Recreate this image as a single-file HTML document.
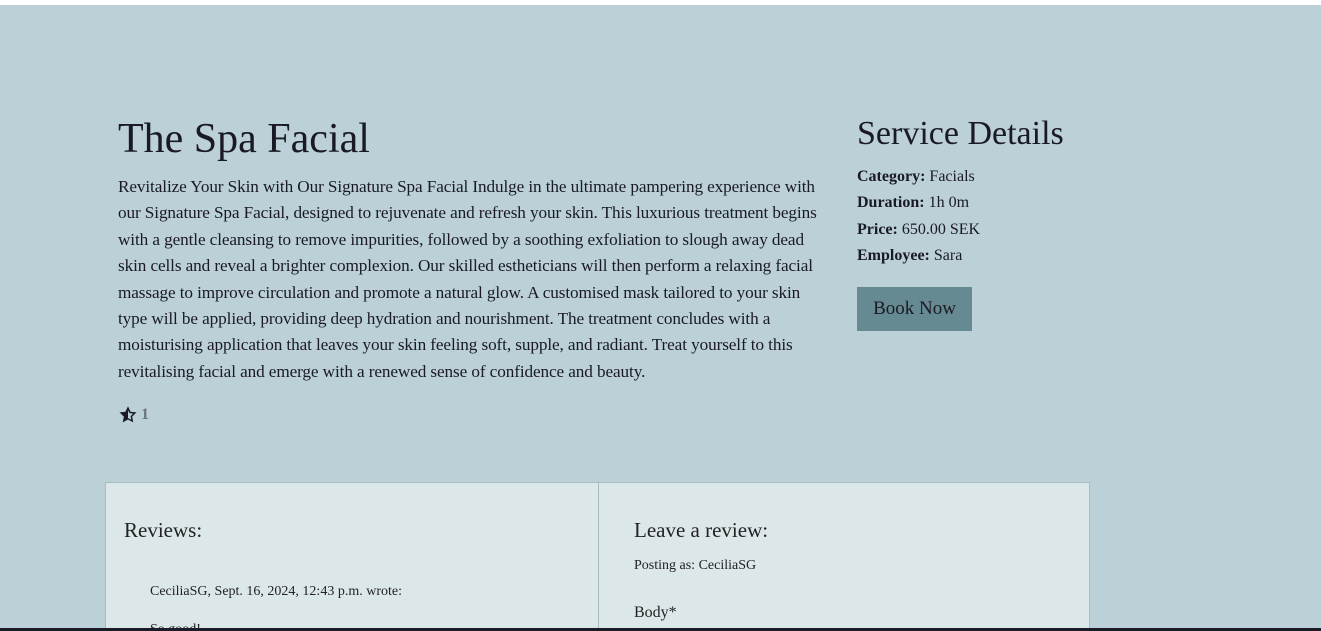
<!DOCTYPE html>
<html><head><style>
html,body{margin:0;padding:0;width:1321px;height:631px;overflow:hidden;}
body{background:#fff;position:relative;font-family:"Liberation Serif",serif;color:#1a1a24;}
.bg{position:absolute;top:5px;left:0;width:1321px;height:626px;background:#bbd0d7;}
.bot{position:absolute;left:0;top:628px;width:1321px;height:3px;background:#1c1c28;}
.a{position:absolute;white-space:nowrap;}
h1{position:absolute;left:118px;top:113px;margin:0;font-weight:normal;font-size:42px;line-height:52px;}
.desc{position:absolute;left:118px;top:174px;font-size:17.2px;line-height:26.4px;white-space:nowrap;letter-spacing:-0.1px;}
h2{position:absolute;left:857px;top:112px;margin:0;font-weight:normal;font-size:34px;line-height:44px;}
.det{position:absolute;left:857px;top:164px;font-size:16px;line-height:26.4px;}
.btn{position:absolute;left:857px;top:287px;width:115px;height:44px;background:#668a92;font-size:19px;line-height:44px;text-align:center;}
.box{position:absolute;top:482px;height:150px;background:#dce7ea;border:1px solid #a9bcc2;}
</style></head><body>
<div class="bg"></div>
<h1>The Spa Facial</h1>
<div class="desc">Revitalize Your Skin with Our Signature Spa Facial Indulge in the ultimate pampering experience with<br>our Signature Spa Facial, designed to rejuvenate and refresh your skin. This luxurious treatment begins<br>with a gentle cleansing to remove impurities, followed by a soothing exfoliation to slough away dead<br>skin cells and reveal a brighter complexion. Our skilled estheticians will then perform a relaxing facial<br>massage to improve circulation and promote a natural glow. A customised mask tailored to your skin<br>type will be applied, providing deep hydration and nourishment. The treatment concludes with a<br>moisturising application that leaves your skin feeling soft, supple, and radiant. Treat yourself to this<br>revitalising facial and emerge with a renewed sense of confidence and beauty.</div>
<svg class="a" style="left:118px;top:405px" width="20" height="19" viewBox="0 0 24 23"><path d="M12 1.5l3.1 6.6 7.2.9-5.3 5 1.4 7.1L12 17.6 5.6 21.1 7 14 1.7 9l7.2-.9z" fill="#1a1a24"/><path d="M12 6.5v9.2l3.9 2.1-.8-4.4 3.2-3-4.4-.6z" fill="#bbd0d7"/></svg>
<div class="a" style="left:141px;top:406px;font-size:16px;font-weight:bold;color:#6c757d">1</div>
<h2>Service Details</h2>
<div class="det"><b>Category:</b> Facials<br><b>Duration:</b> 1h 0m<br><b>Price:</b> 650.00 SEK<br><b>Employee:</b> Sara</div>
<div class="btn">Book Now</div>
<div class="box" style="left:105px;width:492px"></div>
<div class="box" style="left:598px;width:490px"></div>
<div class="a" style="left:124px;top:518px;font-size:21px;color:#222">Reviews:</div>
<div class="a" style="left:150px;top:584px;font-size:14px;color:#222">CeciliaSG, Sept. 16, 2024, 12:43 p.m. wrote:</div>
<div class="a" style="left:150px;top:622px;font-size:14px;color:#222">So good!</div>
<div class="a" style="left:634px;top:518px;font-size:21px;color:#222">Leave a review:</div>
<div class="a" style="left:634px;top:558px;font-size:14px;color:#222">Posting as: CeciliaSG</div>
<div class="a" style="left:634px;top:604px;font-size:16px;color:#222">Body*</div>
<div class="bot"></div>
</body></html>
